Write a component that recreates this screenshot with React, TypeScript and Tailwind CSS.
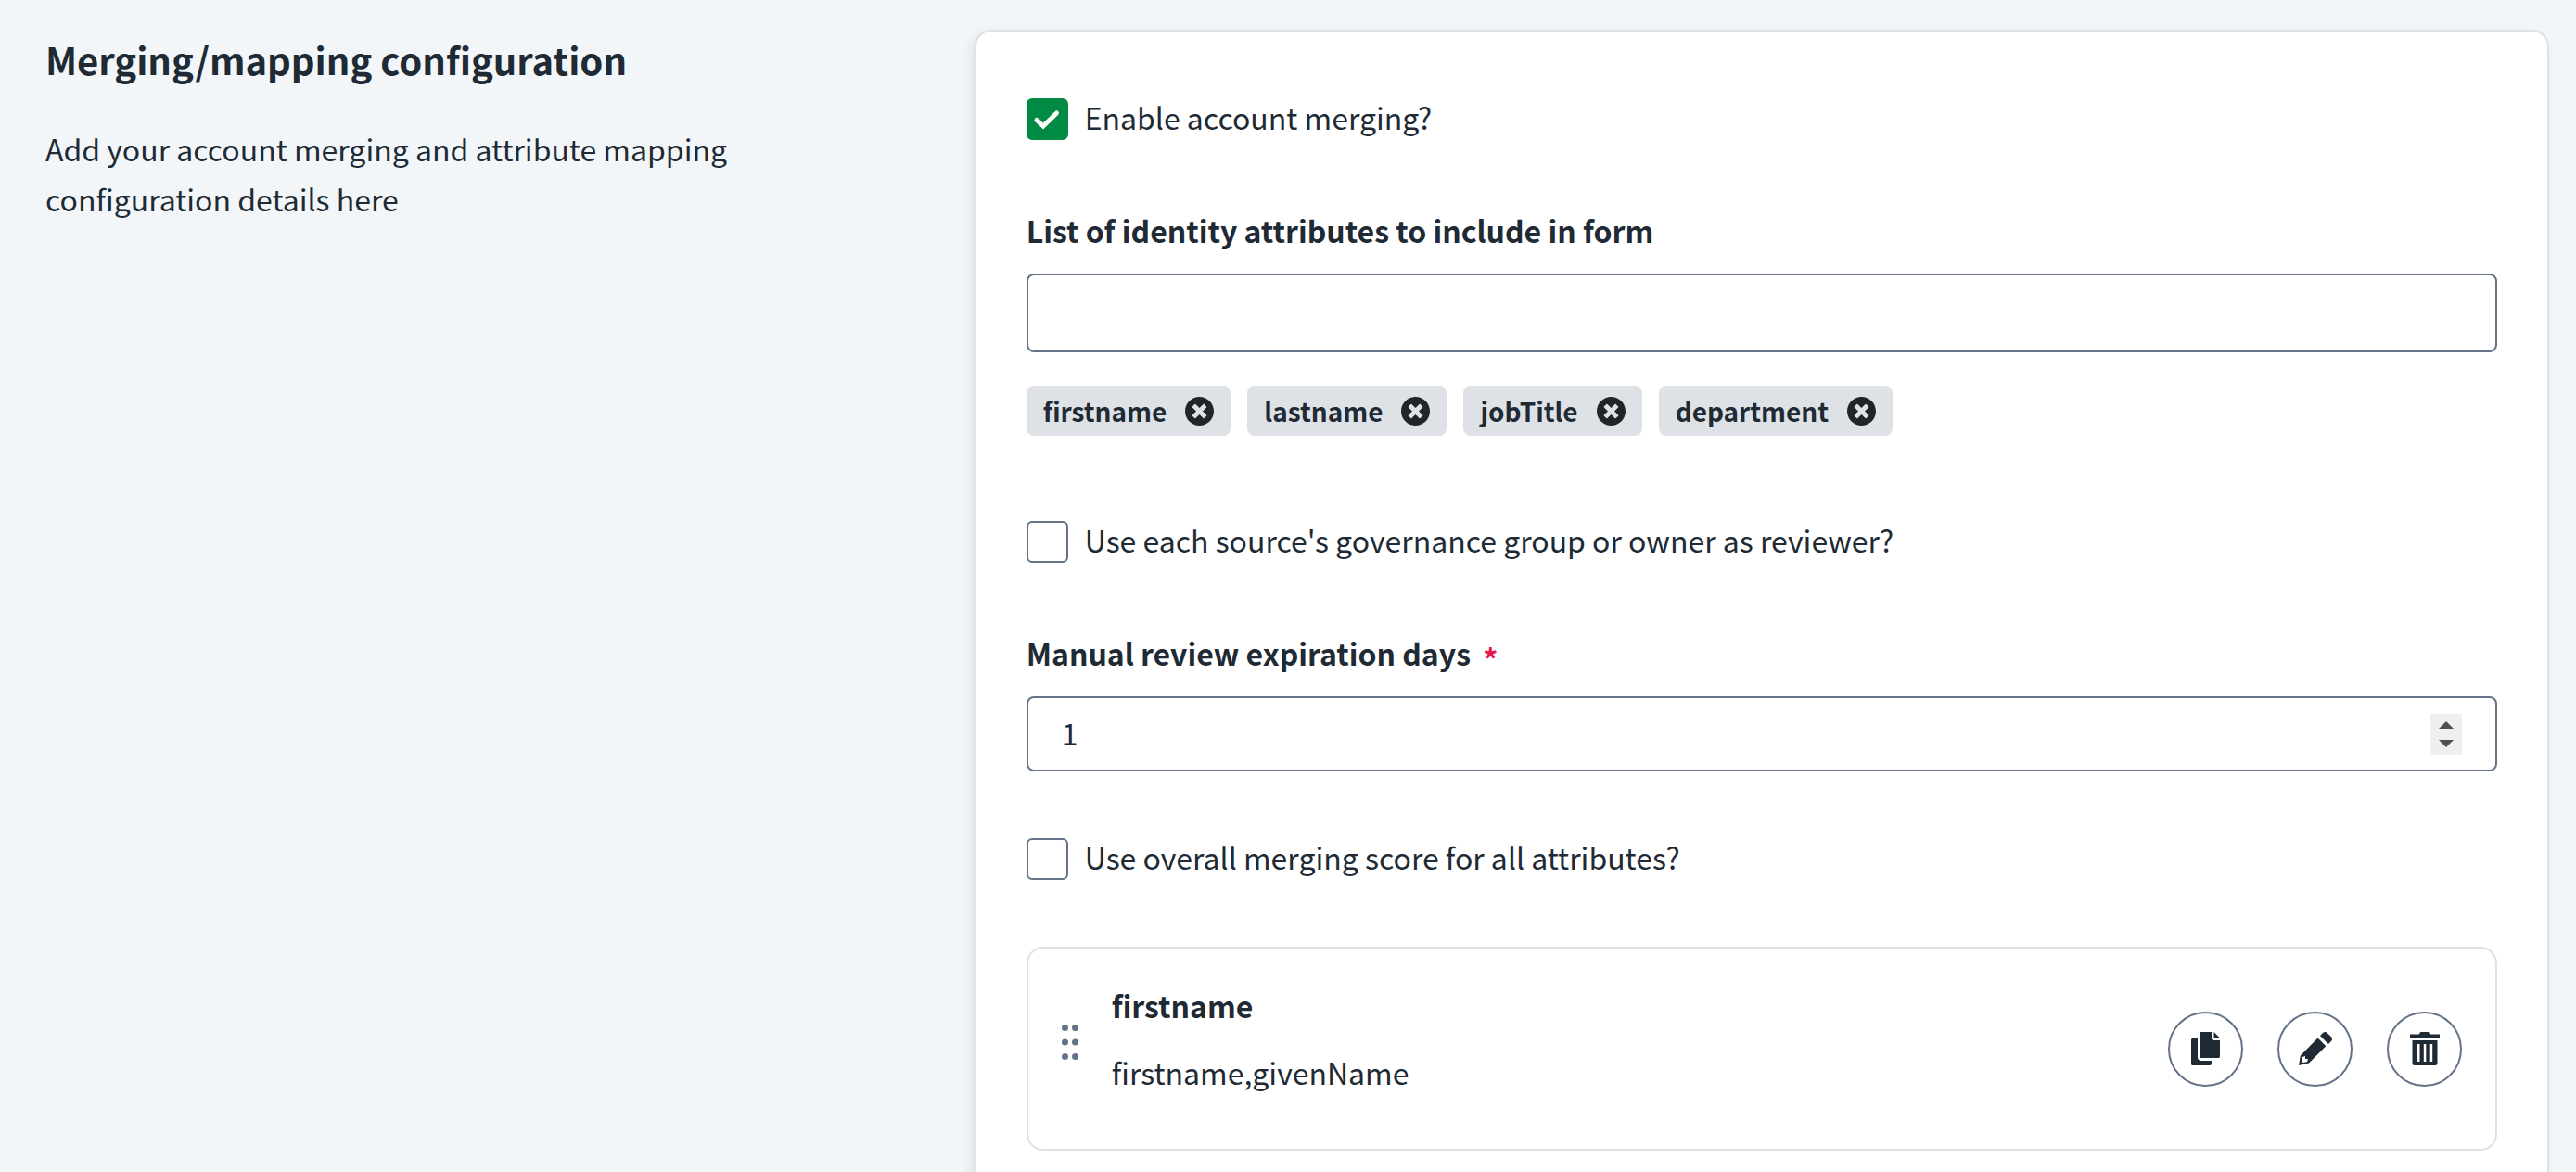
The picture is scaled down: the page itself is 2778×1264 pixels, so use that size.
import { useState } from "react";
import type { ReactNode } from "react";

function Check({ id, label, initial = false }: { id: string; label: string; initial?: boolean }) {
  const [on, setOn] = useState(initial);
  return (
    <div className="flex items-center gap-[18px]">
      <span className="relative size-[45px] shrink-0">
        <input
          id={id}
          type="checkbox"
          checked={on}
          onChange={(e) => setOn(e.target.checked)}
          className="block size-full appearance-none rounded-md border-2 border-[#647387] bg-white checked:border-[#008a43] checked:bg-[#008a43]"
        />
        {on && (
          <svg viewBox="0 0 45 45" className="pointer-events-none absolute inset-0 size-full fill-none stroke-white stroke-[5]" strokeLinecap="round" aria-hidden="true">
            <path d="M11 23.500 18 30 32.500 16" />
          </svg>
        )}
      </span>
      <label htmlFor={id} className="pb-1 leading-[50px]">{label}</label>
    </div>
  );
}

function Tag({ name, onRemove }: { name: string; onRemove: () => void }) {
  return (
    <li className="flex h-[54px] items-center gap-5 rounded-lg bg-[#dee2e7] px-[18px] text-[28px] font-bold">
      {name}
      <button type="button" aria-label={`Remove ${name}`} onClick={onRemove}>
        <svg viewBox="8 8 496 496" className="size-[31px] fill-[#212529]" aria-hidden="true">
          <path d="M256 8C119 8 8 119 8 256s111 248 248 248 248-111 248-248S393 8 256 8zm121.6 313.1c4.7 4.700 4.700 12.300 0 17L338 377.600c-4.700 4.700-12.300 4.700-17 0L256 312l-65.100 65.600c-4.700 4.700-12.300 4.700-17 0L134.400 338c-4.700-4.700-4.700-12.300 0-17l65.600-65-65.600-65.100c-4.700-4.700-4.700-12.300 0-17l39.600-39.600c4.700-4.700 12.300-4.700 17 0l65 65.700 65.100-65.600c4.700-4.700 12.300-4.700 17 0l39.600 39.600c4.700 4.700 4.700 12.300 0 17L312 256l65.600 65.100z" />
        </svg>
      </button>
    </li>
  );
}

function RoundButton({ label, children }: { label: string; children: ReactNode }) {
  return (
    <button
      type="button"
      aria-label={label}
      className="flex size-[81px] items-center justify-center rounded-full border-2 border-[#647387] bg-white text-[#202a34]"
    >
      {children}
    </button>
  );
}

export default function App() {
  const [tags, setTags] = useState(["firstname", "lastname", "jobTitle", "department"]);
  const [days, setDays] = useState(1);

  return (
    <main className="flex h-screen items-start overflow-hidden bg-[#f2f6f9] pt-8 pr-[29px] pl-[49px] font-['Noto_Sans_CJK_SC',sans-serif] text-[32px] leading-[54px] text-[#202a34]">
      <header className="w-[37.1%] shrink-0 pr-40">
        <h1 className="mt-[5px] text-[40px] font-bold">Merging/mapping configuration</h1>
        <p className="mt-[42px]">Add your account merging and attribute mapping configuration details here</p>
      </header>

      <form className="min-w-0 grow rounded-[18px] border-2 border-[#dee2e6] bg-white px-[54px] pt-[67px] pb-14 shadow-[-4px_4px_12px_rgba(0,0,0,0.08)]">
        <Check id="merge" label="Enable account merging?" initial />

        <div className="mt-[66px]">
          <label htmlFor="attrs" className="block font-bold">List of identity attributes to include in form</label>
          <input id="attrs" className="mt-5 block h-[85px] w-full rounded-lg border-2 border-[#647387] bg-white px-9" />
          <ul className="mt-9 flex flex-wrap gap-[18px]">
            {tags.map((t) => (
              <Tag key={t} name={t} onRemove={() => setTags(tags.filter((x) => x !== t))} />
            ))}
          </ul>
        </div>

        <div className="mt-[87px]">
          <Check id="owner" label="Use each source's governance group or owner as reviewer?" />
        </div>

        <div className="mt-[66px]">
          <label htmlFor="days" className="block font-bold">
            Manual review expiration days <span className="ml-1.5 align-[-6px] leading-none text-[#e6194b]">*</span>
          </label>
          <div className="relative mt-5">
            <input
              id="days"
              type="number"
              value={days}
              onChange={(e) => setDays(Number(e.target.value))}
              className="block h-[81px] w-full appearance-none rounded-lg border-2 border-[#647387] bg-white px-9 pb-1 [&::-webkit-inner-spin-button]:appearance-none"
            />
            <div className="absolute inset-y-0 right-[38px] my-auto flex h-11 w-[34px] flex-col bg-[#efefef] text-[#505050]">
              <button type="button" aria-label="Increase" className="flex grow items-end justify-center pb-1.5" onClick={() => setDays(days + 1)}>
                <svg viewBox="0 0 16 8" className="h-2 w-4 fill-current" aria-hidden="true"><path d="M0 8 8 0l8 8z" /></svg>
              </button>
              <button type="button" aria-label="Decrease" className="flex grow items-start justify-center pt-1.5" onClick={() => setDays(days - 1)}>
                <svg viewBox="0 0 16 8" className="h-2 w-4 fill-current" aria-hidden="true"><path d="M0 0h16L8 8z" /></svg>
              </button>
            </div>
          </div>
        </div>

        <div className="mt-[67px]">
          <Check id="score" label="Use overall merging score for all attributes?" />
        </div>

        <section className="mt-[68px] flex items-center rounded-[18px] border-2 border-[#dee2e6] px-9 py-[34px]">
          <svg viewBox="0 0 18 38" className="mb-3.5 h-[38px] w-[18px] shrink-0 fill-[#647387]" aria-hidden="true">
            {[3.5, 19, 34.5].map((y) => (
              <g key={y}>
                <circle cx="3.5" cy={y} r="3.5" />
                <circle cx="14.5" cy={y} r="3.5" />
              </g>
            ))}
          </svg>
          <div className="ml-9 grow pb-1">
            <h2 className="font-bold">firstname</h2>
            <p className="my-[18px]">firstname,givenName</p>
          </div>
          <div className="flex gap-[37px]">
            <RoundButton label="Copy">
              <svg viewBox="0 0 32 36" className="h-9 w-8 fill-current" aria-hidden="true">
                <path d="M2 7h5v20c0 2 1 4 4 4h11v3c0 1-.5 2-2 2H2c-1.500 0-2-.5-2-2V9c0-1.500.5-2 2-2z" />
                <path d="M11 0h11v6.500C22 8 23 9 24.500 9H31v17c0 1.500-.5 2-2 2H11c-1.500 0-2-.5-2-2V2c0-1.500.5-2 2-2z" />
                <path d="M24.500 0 31 6.500h-6.500z" />
              </svg>
            </RoundButton>
            <RoundButton label="Edit">
              <svg viewBox="0 0 36 36" className="size-9 fill-current" aria-hidden="true">
                <path d="M23 4 26 1c1.400-1.300 3.300-1.300 4.700 0L35 5.300c1.300 1.400 1.300 3.300 0 4.700L32 13z" />
                <path fillRule="evenodd" d="m20.500 6.500 8.800 8.800L11 33.500 0 36l1.800-10.500zM4 27 2.800 31.500 4.600 33 9 32.200l1-3.200H7v-3z" />
              </svg>
            </RoundButton>
            <RoundButton label="Delete">
              <svg viewBox="0 0 32 36" className="h-9 w-8 fill-current" aria-hidden="true">
                <path d="M0 2.500h10C10.500.6 11 0 12.500 0h7C21 0 21.500.6 22 2.500h10V7H0z" />
                <path fillRule="evenodd" d="M2.500 9h27v24.500c0 1.700-.8 2.500-2.500 2.500H5c-1.700 0-2.500-.8-2.500-2.500zM8 13v19h2.500V13zm6.800 0v19h2.500V13zm6.900 0v19h2.500V13z" />
              </svg>
            </RoundButton>
          </div>
        </section>
      </form>
    </main>
  );
}
